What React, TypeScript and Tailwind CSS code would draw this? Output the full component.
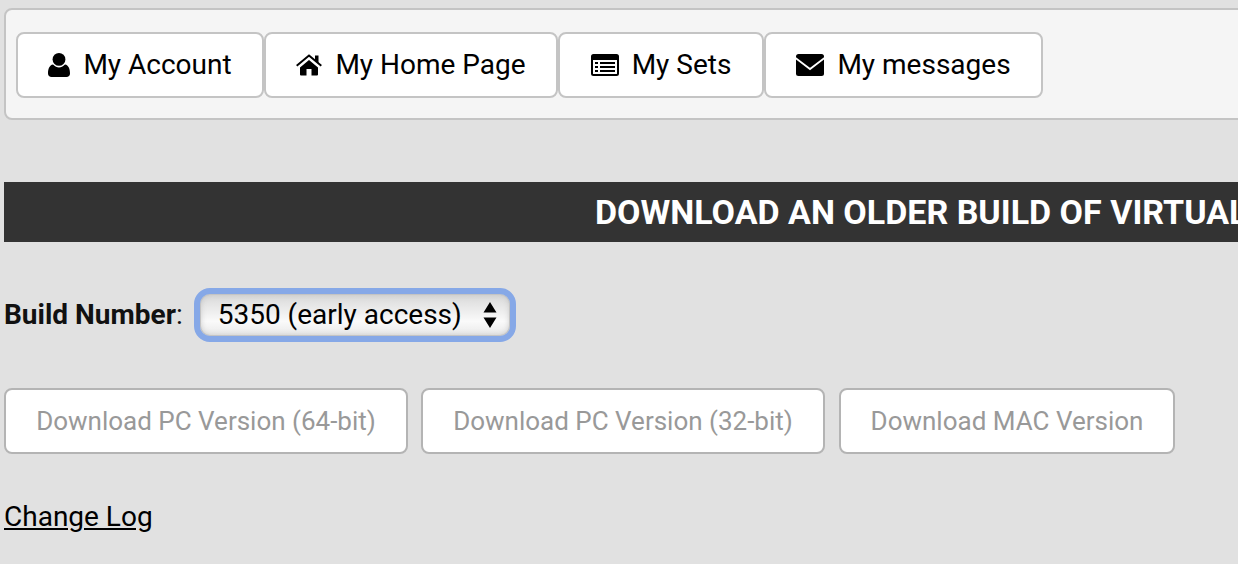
import React from 'react';

const UserIcon = () => (
    <svg viewBox="0 0 22 24" className="h-[24px] w-[22px]" fill="currentColor">
        <circle cx="11" cy="6.4" r="6.4" />
        <path d="M0 20.5C0 16 1.5 12.2 5 11.6 7 13.6 9 14.4 11 14.4s4-.8 6-2.8c3.5.6 5 4.4 5 8.9 0 2.2-1.5 3.5-3.5 3.5h-15C1.500 24 0 22.700 0 20.500z" />
    </svg>
);

const HomeIcon = () => (
    <svg viewBox="0 0 26 22" className="h-[22px] w-[26px]" fill="currentColor">
        <path d="M4 13.500 13 6l9 7.500v7a1 1 0 0 1-1 1h-5.500V15h-5v6.500H5a1 1 0 0 1-1-1z" />
        <path d="M.7 11.800 13 1.500l12.300 10.300" fill="none" stroke="currentColor" strokeWidth="2" />
        <path d="M19 1.500h3.500v7.500L19 6z" />
    </svg>
);

const ListIcon = () => (
    <svg viewBox="0 0 28 22" className="h-[22px] w-[28px]" fill="currentColor">
        <path
            fillRule="evenodd"
            d="M2.500 0h23A2.500 2.500 0 0 1 28 2.500v17a2.500 2.500 0 0 1-2.500 2.500h-23A2.500 2.500 0 0 1 0 19.500v-17A2.500 2.500 0 0 1 2.500 0zM2 6v13.500a.5.500 0 0 0 .5.500h23a.5.500 0 0 0 .5-.5V6z"
        />
        <path d="M4 8h3v2H4zM9 8h15v2H9zM4 12h3v2H4zM9 12h15v2H9zM4 16h3v2H4zM9 16h15v2H9z" />
    </svg>
);

const EnvelopeIcon = () => (
    <svg viewBox="0 0 28 22" className="h-[22px] w-[28px]">
        <rect width="28" height="22" rx="2.500" fill="currentColor" />
        <path d="M-1 3.500 14 15 29 3.500" fill="none" stroke="white" strokeWidth="1.800" />
    </svg>
);

const navItems = [
    { label: 'My Account', icon: <UserIcon />, cls: 'w-[248px]' },
    { label: 'My Home Page', icon: <HomeIcon />, cls: 'w-[294px]' },
    { label: 'My Sets', icon: <ListIcon />, cls: 'w-[206px]' },
    { label: 'My messages', icon: <EnvelopeIcon />, cls: 'w-[279px]' },
];

const downloads = [
    { label: 'Download PC Version (64-bit)', cls: 'w-[404px]' },
    { label: 'Download PC Version (32-bit)', cls: 'w-[404px] ml-[13px]' },
    { label: 'Download MAC Version', cls: 'w-[336px] ml-[14px]' },
];

export default function App() {
    return (
        <div className="h-[564px] w-[1238px] overflow-hidden bg-[#e1e1e1] font-['Roboto',sans-serif] text-[#111]">
            <div className="w-[1888px] pl-1 pt-2">
                <div className="flex h-[112px] items-center rounded-lg border-2 border-[#c4c4c4] bg-[#f5f5f5] pl-[10px] pt-[2px]">
                    {navItems.map(item => (
                        <button
                            key={item.label}
                            type="button"
                            className={`${item.cls} flex h-[66px] items-center justify-center gap-[13px] rounded-lg border-2 border-[#c4c4c4] bg-white text-[28px] text-black`}
                        >
                            {item.icon}
                            {item.label}
                        </button>
                    ))}
                </div>

                <div className="mt-[62px] flex h-[60px] items-center justify-center bg-[#333] text-[34px] font-bold text-white">
                    DOWNLOAD AN OLDER BUILD OF VIRTUAL DJ
                </div>

                <div className="mt-[46px] flex h-[54px] items-center">
                    <span className="text-[28px]">
                        <b>Build Number</b>:
                    </span>
                    <div className="ml-[11px] flex h-[54px] w-[322px] items-center justify-between rounded-[16px] border-[6px] border-[#86a8e7] bg-[linear-gradient(#d8d8d8,#fafafa_65%,#e8e8e8)] pl-[18px] pr-[13px] text-[28px] text-black shadow-[inset_0_0_0_1px_#c4c4c4,inset_0_0_6px_#c0c0c0]">
                        5350 (early access)
                        <svg viewBox="0 0 14 28" className="h-[28px] w-[14px]" fill="currentColor">
                            <path d="M7 1l6.500 10.500H.5zM7 27L.5 16.500h13z" />
                        </svg>
                    </div>
                </div>

                <div className="mt-[46px] flex">
                    {downloads.map(d => (
                        <button
                            key={d.label}
                            type="button"
                            className={`${d.cls} h-[66px] rounded-lg border-2 border-[#b4b4b4] bg-white text-[26px] text-[#999]`}
                        >
                            {d.label}
                        </button>
                    ))}
                </div>

                <a href="#" className="mt-[42px] inline-block text-[28px] text-black underline">
                    Change Log
                </a>
            </div>
        </div>
    );
}
